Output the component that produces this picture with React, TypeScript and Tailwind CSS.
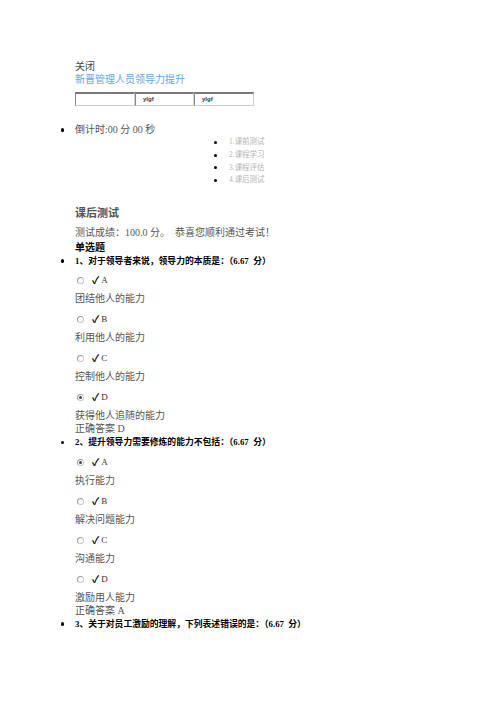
import * as React from "react";

const font = "font-['Liberation_Serif','Noto_Sans_CJK_SC',serif]";

function Dot({ small }: { small?: boolean }) {
    return (
        <span className={small ? "w-[16px] shrink-0 flex items-center" : "w-[15px] shrink-0 flex items-center"}>
            <span className={small ? "block w-[3px] h-[3px] rounded-full bg-black ml-[1px]" : "block w-[3.5px] h-[3.5px] rounded-full bg-black ml-[0.5px]"} />
        </span>
    );
}

function Radio({ checked }: { checked?: boolean }) {
    return (
        <span className="ml-[2px] w-[7px] h-[7px] rounded-full border border-[#c8c8c8] border-t-[#999] border-l-[#999] bg-white flex items-center justify-center">
            {checked && <span className="block w-[3px] h-[3px] rounded-full bg-[#444]" />}
        </span>
    );
}

type Opt = { key: string; text: string; checked?: boolean };

function Question({ title, options, answer }: { title: string; options: Opt[]; answer?: string }) {
    return (
        <div>
            <div className="flex mt-[2px] leading-[11px] text-[8.8px] font-bold text-black">
                <Dot />
                <span className="whitespace-pre">{title}</span>
            </div>
            {options.map((o, i) => (
                <div key={o.key} className="pl-[15px]">
                    <div className={`flex items-center h-[13px] ${i === 0 ? "mt-[7.5px]" : "mt-[8px]"}`}>
                        <Radio checked={o.checked} />
                        <span className="ml-[8px] text-[10px] font-bold text-black leading-[13px]">✓</span>
                        <span className="ml-[2px] text-[9px] text-[#333] leading-[13px]">{o.key}</span>
                    </div>
                    <div className="mt-[5px] text-[10px] leading-[13px] text-[#555]">{o.text}</div>
                </div>
            ))}
            {answer && <div className="pl-[15px] text-[10px] leading-[13px] text-[#555]">正确答案 {answer}</div>}
        </div>
    );
}

export default function App() {
    const steps = ["1.课前测试", "2.课程学习", "3.课程评估", "4.课后测试"];

    return (
        <div className={`min-h-screen w-full bg-white pt-[59.5px] pl-[60px] ${font}`}>
            <div className="pl-[15px]">
                <div className="text-[10px] leading-[13px] text-[#444]">关闭</div>
                <div className="text-[10px] leading-[13px] text-[#64a6e0]">新晋管理人员领导力提升</div>
                <div className="mt-[6px] flex w-[179px] h-[14px]">
                    {["", "ylgf", "ylgf"].map((t, i) => (
                        <div
                            key={i}
                            className={`${i === 1 ? "w-[59px]" : "w-[60px]"} h-full border border-t-2 border-t-[#7a7a7a] border-l-[#8a8a8a] border-b-[#cfcfcf] border-r-[#cfcfcf] pl-[7px] text-[6px] font-bold leading-[10px] text-[#333] font-['Liberation_Sans',sans-serif]`}
                        >
                            {t}
                        </div>
                    ))}
                </div>
            </div>

            <div className="mt-[18px] flex text-[10px] leading-[12.7px] text-[#555]">
                <Dot />
                <span>倒计时:00 分 00 秒</span>
            </div>
            <div className="ml-[153px]">
                {steps.map((s) => (
                    <div key={s} className="flex text-[7.5px] leading-[12.7px] text-[#b3b3b3]">
                        <Dot small />
                        <span>{s}</span>
                    </div>
                ))}
            </div>

            <div className="pl-[15px]">
                <div className="mt-[19px] text-[11px] leading-[14px] font-bold text-[#555]">课后测试</div>
                <div className="mt-[5.5px] text-[10px] leading-[13px] text-[#555] whitespace-pre">测试成绩：100.0 分。  恭喜您顺利通过考试！</div>
                <div className="mt-[2px] text-[10px] leading-[13px] font-bold text-black">单选题</div>
            </div>

            <Question
                title="1、对于领导者来说，领导力的本质是：（6.67  分）"
                options={[
                    { key: "A", text: "团结他人的能力" },
                    { key: "B", text: "利用他人的能力" },
                    { key: "C", text: "控制他人的能力" },
                    { key: "D", text: "获得他人追随的能力", checked: true },
                ]}
                answer="D"
            />
            <Question
                title="2、提升领导力需要修炼的能力不包括：（6.67  分）"
                options={[
                    { key: "A", text: "执行能力", checked: true },
                    { key: "B", text: "解决问题能力" },
                    { key: "C", text: "沟通能力" },
                    { key: "D", text: "激励用人能力" },
                ]}
                answer="A"
            />
            <div className="flex mt-[2px] leading-[11px] text-[8.8px] font-bold text-black">
                <Dot />
                <span className="whitespace-pre">3、关于对员工激励的理解，下列表述错误的是：（6.67  分）</span>
            </div>
        </div>
    );
}
